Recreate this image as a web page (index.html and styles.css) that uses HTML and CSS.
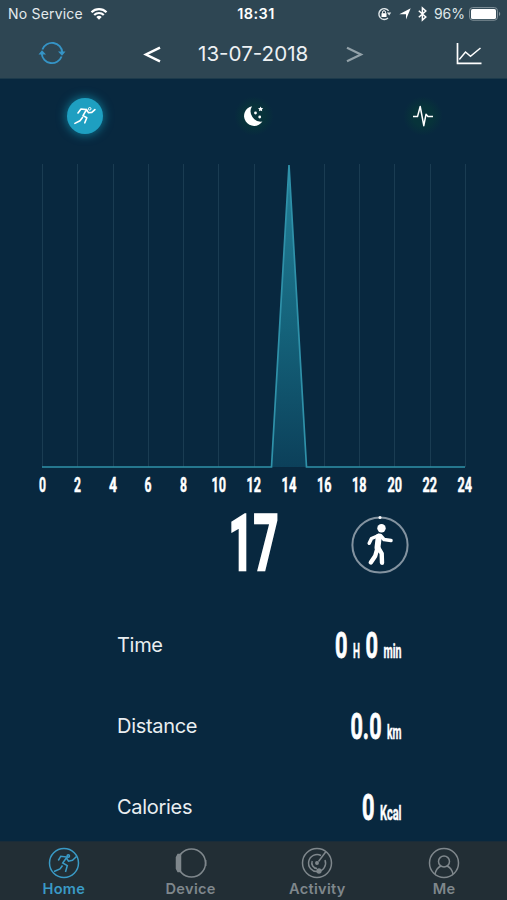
FILE: index.html
```
<!DOCTYPE html>
<html lang="en">
<head>
  <meta charset="UTF-8">
  <meta name="viewport" content="width=device-width, initial-scale=1.0">
  <title>Home</title>
  <link rel="stylesheet" href="styles.css">
</head>
<body>
  <!-- Status bar and date -->
  <header>
    <div class="status">
      <div class="status-left">
        <span class="carrier">No Service</span>
        <svg class="wifi" width="18" height="14" viewBox="0 0 18 14">
          <path d="M1.5 5.2a10.6 10.6 0 0 1 15 0M4.2 8a6.8 6.8 0 0 1 9.6 0" fill="none" stroke="#fff" stroke-width="2.2"/>
          <path d="M6.3 10a3.9 3.9 0 0 1 5.4 0L9 12.8z" fill="#fff"/>
        </svg>
      </div>
      <span class="clock">18:31</span>
      <div class="status-right">
        <svg width="15" height="14" viewBox="0 0 15 14">
          <path d="M11.6 3.8A5.4 5.4 0 1 0 11 11" fill="none" stroke="#dfe6e9" stroke-width="1.4"/>
          <path d="M9.8 5.6h4.4l-2 3z" fill="#dfe6e9"/>
          <rect x="4.5" y="6.2" width="5" height="3.8" fill="#fff"/>
          <path d="M5.5 6.4V5.2a1.5 1.5 0 0 1 3 0v1.2" fill="none" stroke="#fff"/>
        </svg>
        <svg class="arrow" width="12" height="12" viewBox="0 0 12 12"><path d="M11.7.3L7 11.5V6.2H.3z" fill="#fff"/></svg>
        <svg class="bluetooth" width="9" height="14" viewBox="0 0 9 14"><path d="M.8 3.8l7 6.2-3.4 3V1l3.4 3-7 6.2" fill="none" stroke="#fff" stroke-width="1.5"/></svg>
        <span class="percent">96%</span>
        <svg class="battery" width="32" height="14" viewBox="0 0 32 14">
          <rect x=".6" y=".6" width="27.8" height="12.6" rx="3" fill="none" stroke="#84949c"/>
          <rect x="2" y="2" width="25" height="10" rx="1.6" fill="#fff"/>
          <path d="M30 4.8q2.5 2.2 0 4.4z" fill="#84949c"/>
        </svg>
      </div>
    </div>
    <div class="date-bar">
      <svg class="sync" width="28" height="26" viewBox="0 0 28 26">
        <path d="M4.4 9.5A10.3 10.3 0 0 1 24.3 12.5M23.6 16.5A10.3 10.3 0 0 1 3.7 13.5" fill="none" stroke="#3594c6" stroke-width="1.9"/>
        <path d="M20 11.5h7.5L24 15.8zM.5 14.5H8L4 10.2z" fill="#3594c6"/>
      </svg>
      <svg class="prev" width="17" height="17" viewBox="0 0 17 17"><path d="M16 1.7L2 8.5l14 6.8" fill="none" stroke="#fff" stroke-width="2.5"/></svg>
      <span class="date">13-07-2018</span>
      <svg class="next" width="17" height="17" viewBox="0 0 17 17"><path d="M1 1.7l14 6.8-14 6.8" fill="none" stroke="#93a2a9" stroke-width="2.2"/></svg>
      <svg class="trend" width="26" height="23" viewBox="0 0 26 23">
        <path d="M1.5 1v20.4h24" fill="none" stroke="#fff" stroke-width="1.7"/>
        <path d="M3.3 17.5L9.5 10l5 4.3L24.5 6" fill="none" stroke="#fff" stroke-width="1.5"/>
      </svg>
    </div>
  </header>

  <!-- Run / sleep / heart rate -->
  <div class="modes">
    <div class="mode active">
      <svg width="24" height="22" viewBox="0 0 24 22">
        <path d="M5 8l3-4 5.5.6-3.5 6 3.8 2.2-2 5M9.5 12.4L7 15.7l-5.1 2.7M13.7 4.6l1.8 3.2 3.3-.4 3.1-2.8" fill="none" stroke="#fff" stroke-width="1.6" stroke-linecap="round" stroke-linejoin="round"/>
        <circle cx="16.7" cy="3.8" r="1.3" fill="none" stroke="#fff"/>
      </svg>
    </div>
    <div class="mode">
      <svg width="22" height="22" viewBox="0 0 22 22">
        <path d="M9 1.2A10 10 0 1 0 19.4 16.5A10.3 10.3 0 0 1 9 1.2z" fill="#fff"/>
        <path d="M17.6 1.5l.8 1.6 1.8.2-1.3 1.2.3 1.8-1.6-.9-1.6.9.3-1.8L15 3.3l1.8-.2z" fill="#fff"/>
        <circle cx="12.5" cy="8" r="1.4" fill="#fff"/>
        <circle cx="16.7" cy="12" r="1.4" fill="#fff"/>
      </svg>
    </div>
    <div class="mode">
      <svg width="22" height="22" viewBox="0 0 22 22">
        <path d="M1 11.6h4.5L8.2 1.5l3.6 19.2 2.2-11.4 2 2.3H21" fill="none" stroke="#fff" stroke-width="1.5" stroke-linejoin="round"/>
      </svg>
    </div>
  </div>

  <!-- Steps by hour -->
  <svg class="chart" width="507" height="350" viewBox="0 150 507 350">
    <defs>
      <linearGradient id="peak" x1="0" y1="0" x2="0" y2="1">
        <stop offset="0" stop-color="#237f97"/>
        <stop offset=".55" stop-color="#14627a"/>
        <stop offset="1" stop-color="#0c405a"/>
      </linearGradient>
    </defs>
    <path class="grid" d="M42.5 164v303M77.5 164v303M113.5 164v303M148.5 164v303M183.5 164v303M218.5 164v303M254.5 164v303M324.5 164v303M359.5 164v303M394.5 164v303M430.5 164v303M465.5 164v303"/>
    <path d="M271.5 467L289 165l17.5 302z" fill="url(#peak)"/>
    <path class="line" d="M42 467h229.5L289 165l17.5 302H465"/>
    <g class="hours">
      <text x="39" y="492" textLength="7" lengthAdjust="spacingAndGlyphs">0</text>
      <text x="74" y="492" textLength="7" lengthAdjust="spacingAndGlyphs">2</text>
      <text x="109" y="492" textLength="8" lengthAdjust="spacingAndGlyphs">4</text>
      <text x="144.5" y="492" textLength="7" lengthAdjust="spacingAndGlyphs">6</text>
      <text x="180" y="492" textLength="7" lengthAdjust="spacingAndGlyphs">8</text>
      <text x="211.5" y="492" textLength="14.5" lengthAdjust="spacingAndGlyphs">10</text>
      <text x="246.5" y="492" textLength="14.5" lengthAdjust="spacingAndGlyphs">12</text>
      <text x="281.5" y="492" textLength="15" lengthAdjust="spacingAndGlyphs">14</text>
      <text x="317" y="492" textLength="14.5" lengthAdjust="spacingAndGlyphs">16</text>
      <text x="352" y="492" textLength="14.5" lengthAdjust="spacingAndGlyphs">18</text>
      <text x="387.5" y="492" textLength="14.5" lengthAdjust="spacingAndGlyphs">20</text>
      <text x="422.5" y="492" textLength="14.5" lengthAdjust="spacingAndGlyphs">22</text>
      <text x="457.5" y="492" textLength="14.5" lengthAdjust="spacingAndGlyphs">24</text>
    </g>
  </svg>

  <div class="steps">
    <svg class="count" width="56" height="80" viewBox="0 0 56 80">
      <text x="2.5" y="63.2" textLength="50" lengthAdjust="spacingAndGlyphs">17</text>
    </svg>
    <svg class="walk" width="60" height="60" viewBox="0 0 60 60">
      <circle cx="30" cy="30" r="27.6" fill="none" stroke="#8393a0" stroke-width="2"/>
      <circle cx="30" cy="2.4" r="1.5" fill="#fff"/>
      <circle cx="31.5" cy="13.2" r="4.2" fill="#fff"/>
      <g fill="none" stroke="#fff" stroke-linecap="round" stroke-linejoin="round">
        <path d="M28.5 20.5L21.5 23.5l-2.3 4.8M30.5 20.5l3.5 4 7 1" stroke-width="3.5"/>
        <path d="M28.8 21.5l-1.3 11" stroke-width="6"/>
        <path d="M27.5 33l-2.3 8-4.4 6.5M28.5 33l3.2 5.5.3 9.3" stroke-width="4.4"/>
      </g>
    </svg>
  </div>

  <!-- Totals -->
  <main class="totals">
    <div class="row">
      <span class="label">Time</span>
      <svg class="value" width="80" height="50" viewBox="325 620 80 50">
        <text x="335" y="657.5" textLength="12.5" lengthAdjust="spacingAndGlyphs">0</text>
        <text class="unit" x="353" y="657.5" textLength="7" lengthAdjust="spacingAndGlyphs">H</text>
        <text x="365.5" y="657.5" textLength="12.5" lengthAdjust="spacingAndGlyphs">0</text>
        <text class="unit" x="383.5" y="657.5" textLength="18" lengthAdjust="spacingAndGlyphs">min</text>
      </svg>
    </div>
    <div class="row">
      <span class="label">Distance</span>
      <svg class="value" width="80" height="50" viewBox="325 620 80 50">
        <text x="350.5" y="657.5" textLength="31" lengthAdjust="spacingAndGlyphs">0.0</text>
        <text class="unit" x="387" y="657.5" textLength="14.5" lengthAdjust="spacingAndGlyphs">km</text>
      </svg>
    </div>
    <div class="row">
      <span class="label">Calories</span>
      <svg class="value" width="80" height="50" viewBox="325 620 80 50">
        <text x="362" y="657.5" textLength="12.5" lengthAdjust="spacingAndGlyphs">0</text>
        <text class="unit" x="380" y="657.5" textLength="21.5" lengthAdjust="spacingAndGlyphs">Kcal</text>
      </svg>
    </div>
  </main>

  <!-- Tab bar -->
  <nav>
    <div class="tab current">
      <svg width="32" height="32" viewBox="0 0 32 32">
        <circle cx="16" cy="16" r="14.5"/>
        <path d="M10.3 13.5l2.5-4.3 6.2.8-4.3 6 4.6 2.5-1.8 6.5M14.5 18.5L12 22l-6 2.5M18.5 11l2 3.2 4-.9 4-3.8"/>
        <circle cx="20.3" cy="9" r="1.2"/>
      </svg>
      <span>Home</span>
    </div>
    <div class="tab">
      <svg width="32" height="32" viewBox="0 0 32 32">
        <circle cx="16.5" cy="16" r="14"/>
        <path class="solid" d="M5.5 7.5v17H3L1.5 21.5v-11L3 7.5z"/>
        <path d="M30.7 13v6"/>
      </svg>
      <span>Device</span>
    </div>
    <div class="tab">
      <svg width="32" height="32" viewBox="0 0 32 32">
        <circle cx="16" cy="16" r="14.5"/>
        <path d="M20 8.5a8.5 8.5 0 1 0 4 4.5M17.5 14.5L25 4.5M16 21.5a5.5 5.5 0 0 1-4.8-7.5"/>
        <circle class="solid" cx="16" cy="16" r="1.2"/>
        <circle class="solid" cx="18" cy="24" r="1.9"/>
      </svg>
      <span>Activity</span>
    </div>
    <div class="tab">
      <svg width="32" height="32" viewBox="0 0 32 32">
        <circle cx="16" cy="16" r="14.5"/>
        <circle cx="16" cy="14.5" r="5.5"/>
        <path d="M7 27.2c.8-4 3-7 6-8.200M25 27.2c-.8-4-3-7-6-8.200"/>
      </svg>
      <span>Me</span>
    </div>
  </nav>
</body>
</html>
```

FILE: styles.css
```
* {
  box-sizing: border-box;
}

body {
  margin: 0;
  height: 900px;
  overflow: hidden;
  background-color: #08283f;
  color: white;
  font-family: Inter, "Liberation Sans", sans-serif;
  display: flex;
  flex-direction: column;
}

svg {
  display: block;
  flex-shrink: 0;
  overflow: visible;
}

/* Header */
header {
  height: 79px;
  flex-shrink: 0;
  background-color: #2e4653;
  border-bottom: 1px solid #1c3a4b;
}

.status {
  height: 28px;
  padding: 0 6px 0 8px;
  display: grid;
  grid-template-columns: 1fr auto 1fr;
  align-items: center;
  font-size: 14px;
  line-height: 28px;
}

.status-left,
.status-right {
  display: flex;
  align-items: center;
}

.status-right {
  justify-content: flex-end;
}

.carrier {
  color: #e4eaed;
  letter-spacing: 0.2px;
}

.wifi {
  margin-left: 7px;
}

.clock {
  padding-left: 3px;
  font-weight: 600;
  font-size: 14.5px;
  letter-spacing: 0.4px;
}

.arrow {
  margin-left: 7px;
}

.bluetooth {
  margin-left: 7px;
}

.percent {
  margin-left: 7px;
  color: #dfe6e9;
}

.battery {
  margin-left: 4px;
}

.date-bar {
  height: 50px;
  padding: 0 25px 0 38px;
  display: flex;
  align-items: center;
}

.prev {
  margin-left: 78px;
  margin-top: 2px;
}

.date {
  width: 112px;
  margin-left: 37px;
  font-size: 20.6px;
  white-space: nowrap;
  color: #edf1f3;
}

.next {
  margin-left: 36px;
  margin-top: 2px;
}

.trend {
  margin-left: auto;
}

/* Mode buttons */
.modes {
  height: 71px;
  flex-shrink: 0;
  padding: 2px 0 0;
  display: grid;
  grid-template-columns: repeat(3, 1fr);
  justify-items: center;
  align-items: center;
}

.mode {
  width: 40px;
  height: 40px;
  border-radius: 50%;
  background: radial-gradient(circle, #07333a 35%, #08283f 70%);
  display: flex;
  align-items: center;
  justify-content: center;
}

.mode.active {
  width: 36px;
  height: 36px;
  background: #1e9fc1;
  box-shadow: 0 0 9px 2px #0d6681;
}

/* Chart */
.grid {
  stroke: #1a3c52;
  stroke-width: 1;
}

.line {
  fill: none;
  stroke: #2f91a9;
  stroke-width: 1.7;
}

text {
  font-family: Roboto, "Liberation Sans", sans-serif;
  font-weight: 700;
  fill: white;
  stroke: white;
}

.hours text {
  font-size: 21px;
  stroke-width: 0.5;
}

/* Steps */
.steps {
  height: 105px;
  flex-shrink: 0;
  padding: 7px 0 0 226px;
  display: flex;
  align-items: flex-start;
}

.count text {
  font-size: 78px;
  stroke-width: 2.5;
}

.walk {
  margin: 8px 0 0 68px;
}

/* Totals */
.totals {
  flex: 1;
  padding: 10px 102px 0 117px;
  display: flex;
  flex-direction: column;
  gap: 21px;
}

.row {
  height: 60px;
  display: flex;
  align-items: center;
  justify-content: space-between;
}

.label {
  font-size: 20px;
  letter-spacing: -0.3px;
  color: #e9eef1;
}

.value text {
  font-size: 37px;
  stroke-width: 0.8;
}

.value .unit {
  font-size: 21px;
  stroke-width: 0.4;
}

/* Tab bar */
nav {
  height: 59px;
  flex-shrink: 0;
  background-color: #222e35;
  border-top: 1px solid #1a2c39;
  display: grid;
  grid-template-columns: repeat(4, 1fr);
}

.tab {
  padding: 5px 0 0 1px;
  display: flex;
  flex-direction: column;
  align-items: center;
  color: #7f878c;
  font-size: 14.6px;
  font-weight: 600;
}

.tab span {
  line-height: 20px;
  letter-spacing: 0.3px;
}

.tab svg {
  fill: none;
  stroke: currentColor;
  stroke-width: 1.5;
}

.tab .solid {
  fill: currentColor;
}

.tab.current {
  color: #3a9ac6;
}
```
